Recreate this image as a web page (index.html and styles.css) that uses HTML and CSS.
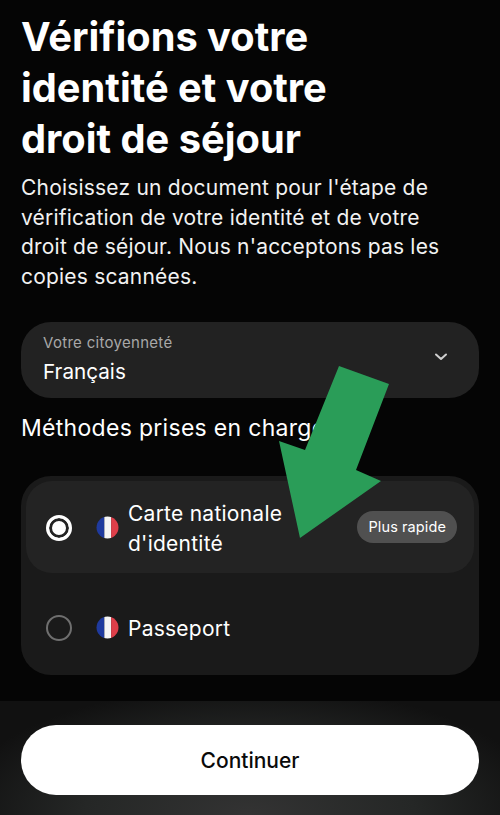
FILE: index.html
```html
<!DOCTYPE html>
<html lang="fr">
<head>
  <meta charset="UTF-8">
  <title>Vérification</title>
  <link rel="stylesheet" href="styles.css">
</head>
<body>
  <main class="content">
    <h1>Vérifions votre<br>identité et votre<br>droit de séjour</h1>
    <p class="intro">Choisissez un document pour l'étape de vérification de votre identité et de votre droit de séjour. Nous n'acceptons pas les copies scannées.</p>

    <div class="select">
      <div>
        <div class="select-label">Votre citoyenneté</div>
        <div class="select-value">Français</div>
      </div>
      <svg class="chevron" width="14" height="10" viewBox="0 0 14 10">
        <path d="M2 2.5 L7 7 L12 2.5" fill="none" stroke="#cfcfcf" stroke-width="2" stroke-linecap="round" stroke-linejoin="round"/>
      </svg>
    </div>

    <h2>Méthodes prises en charge</h2>

    <div class="methods">
      <div class="method selected">
        <span class="radio on"></span>
        <svg class="flag" width="23" height="23" viewBox="0 0 22 22">
          <clipPath id="round1"><circle cx="11" cy="11" r="10.5"/></clipPath>
          <g clip-path="url(#round1)">
            <rect width="8" height="22" fill="#1f3a9e"/>
            <rect x="8" width="6.5" height="22" fill="#f5f5f5"/>
            <rect x="14.5" width="8" height="22" fill="#df3f4a"/>
          </g>
        </svg>
        <span class="method-name">Carte nationale<br>d'identité</span>
        <span class="badge">Plus rapide</span>
      </div>
      <div class="method">
        <span class="radio"></span>
        <svg class="flag" width="23" height="23" viewBox="0 0 22 22">
          <clipPath id="round2"><circle cx="11" cy="11" r="10.5"/></clipPath>
          <g clip-path="url(#round2)">
            <rect width="8" height="22" fill="#1f3a9e"/>
            <rect x="8" width="6.5" height="22" fill="#f5f5f5"/>
            <rect x="14.5" width="8" height="22" fill="#df3f4a"/>
          </g>
        </svg>
        <span class="method-name">Passeport</span>
      </div>
    </div>
  </main>

  <footer class="footer">
    <button class="continue">Continuer</button>
  </footer>

  <svg class="arrow" width="110" height="172" viewBox="0 0 110 172">
    <polygon points="60,0 110,18 77,104 102,115 21,172 0,75 26,84" fill="#2a9d58"/>
  </svg>
</body>
</html>
```

FILE: styles.css
```css
* {
  box-sizing: border-box;
}

html, body {
  margin: 0;
  height: 815px;
  overflow: hidden;
}

body {
  position: relative;
  display: flex;
  flex-direction: column;
  background-color: #050505;
  color: #fff;
  font-family: Inter, "Noto Sans", sans-serif;
  font-optical-sizing: none;
}

.content {
  flex: 1;
  padding: 11px 21px 0;
}

h1 {
  margin: 0;
  font-size: 39.8px;
  line-height: 51px;
  font-weight: 700;
}

.intro {
  margin: 9px 0 0;
  padding-right: 30px;
  font-size: 21px;
  letter-spacing: 0.2px;
  line-height: 29.5px;
  color: #f2f2f2;
}

.select {
  display: flex;
  align-items: center;
  justify-content: space-between;
  height: 76px;
  margin-top: 31px;
  padding: 0 31px 4px 22px;
  background: #222;
  border-radius: 30px;
}

.select-label {
  font-size: 15px;
  letter-spacing: 0.3px;
  line-height: 20px;
  color: #a8a8a8;
}

.select-value {
  margin-top: 7px;
  font-size: 20.7px;
  line-height: 24px;
}

.chevron {
  margin-top: -2px;
}

h2 {
  margin: 17px 0 0;
  font-size: 23px;
  letter-spacing: 0.3px;
  line-height: 26px;
  font-weight: 400;
  white-space: nowrap;
}

.methods {
  margin-top: 35px;
  padding: 5px;
  height: 199px;
  background: #1a1a1a;
  border-radius: 30px;
}

.method {
  display: flex;
  align-items: center;
  height: 92px;
  padding: 1px 17px 0 20px;
}

.method + .method {
  height: 97px;
  padding-top: 12px;
}

.method.selected {
  background: #232323;
  border-radius: 26px;
}

.radio {
  flex: none;
  width: 26px;
  height: 26px;
  border: 2.5px solid #6f6f6f;
  border-radius: 50%;
}

.radio.on {
  border: 3px solid #fff;
  background: #fff;
  box-shadow: inset 0 0 0 3px #232323;
}

.flag {
  flex: none;
  margin-left: 24px;
}

.method-name {
  flex: 1;
  margin: 3px 0 0 9px;
  font-size: 21px;
  letter-spacing: 0.25px;
  line-height: 30px;
}

.badge {
  margin-top: -1px;
  padding: 0 11px;
  height: 32px;
  line-height: 32px;
  font-size: 14.5px;
  letter-spacing: 0.1px;
  background: #505050;
  border-radius: 16px;
}

.footer {
  height: 114px;
  padding: 24px 21px 0;
  background: radial-gradient(ellipse 300px 130px at 50% 100%, #333 0%, #252726 55%, #111 100%);
}

.continue {
  display: block;
  width: 100%;
  height: 70px;
  border: none;
  border-radius: 35px;
  background: #fff;
  color: #0a0a0a;
  font-family: inherit;
  font-optical-sizing: none;
  font-size: 21px;
  font-weight: 450;
}

/* annotation drawn over the screen */
.arrow {
  position: absolute;
  left: 279px;
  top: 366px;
}
```
